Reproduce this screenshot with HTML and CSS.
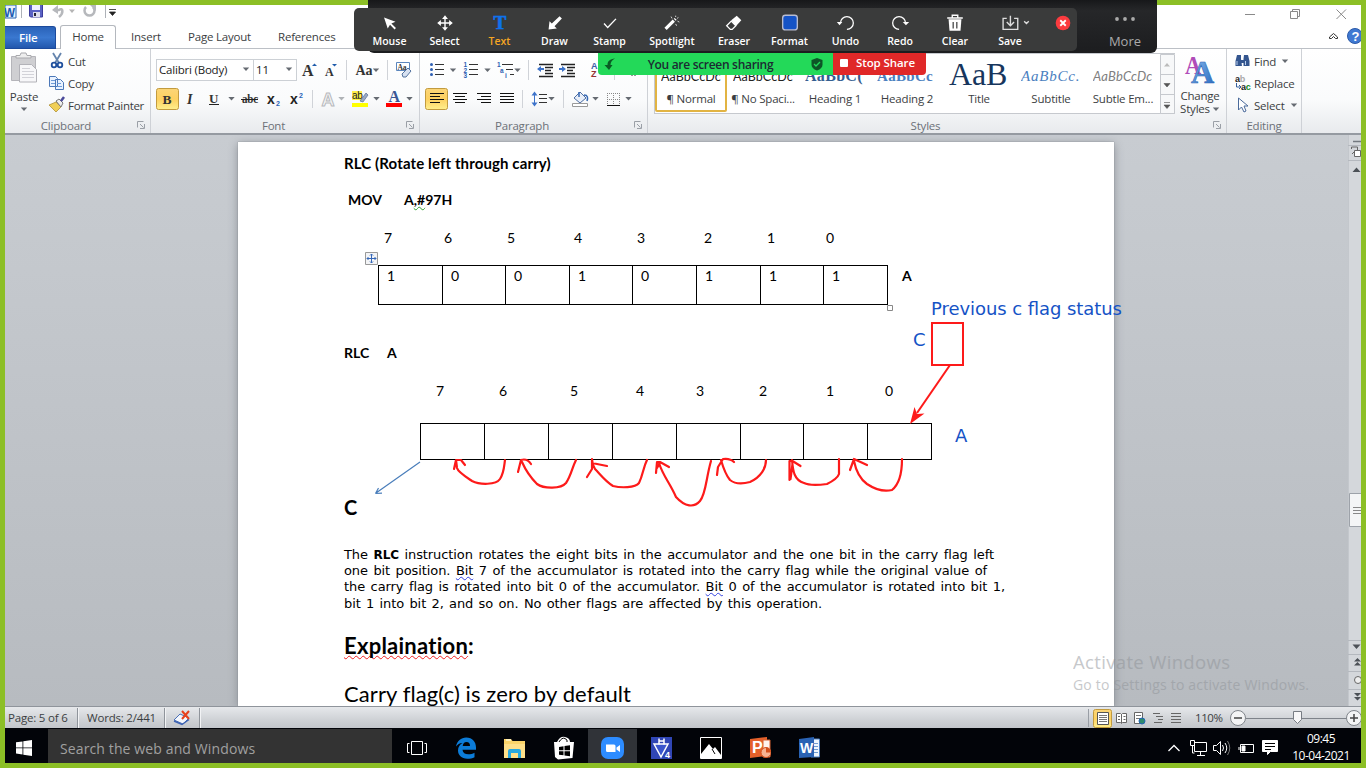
FILE: index.html
```html
<!DOCTYPE html>
<html lang="en">
<head>
<meta charset="utf-8">
<title>Word - shared screen</title>
<link rel="stylesheet" href="styles.css">
</head>
<body>
<svg class="defs" width="0" height="0">
  <defs>
    <path id="dd" d="M-3.2-1.5h6.4L0 2z" fill="#666b72"/>
    <g id="launch" fill="none" stroke="#9a9fa6"><path d="M.5 6.500V.5h6"/><path d="M3 3l3.500 3.500M7.500 3v4.500H3"/></g>
    <linearGradient id="gold" x2="0" y2="1"><stop offset="0" stop-color="#fbd578"/><stop offset=".5" stop-color="#fdd060"/><stop offset="1" stop-color="#ffef8c"/></linearGradient>
    <linearGradient id="blueA" x2="1" y2="1"><stop offset="0" stop-color="#8fc1f2"/><stop offset="1" stop-color="#2566bd"/></linearGradient>
  </defs>
</svg>
<div class="screen">
  <header class="titlebar">
    <svg width="120" height="20" viewBox="5 5 120 20">
      <path d="M5 5h11v13H5z" fill="#eaf2fb" stroke="#2a65b3"/><text x="4" y="16.500" class="wl" textLength="11" lengthAdjust="spacingAndGlyphs">W</text>
      <path d="M21.500 5v13M105.500 5v13" stroke="#aeb2b8"/>
      <path d="M29.500 3h13v14h-12l-1-1z" fill="#5a62c4" stroke="#3c3c9c"/><path d="M32 3h8v7h-8z" fill="#eef0ff"/><path d="M33 12h7v5h-7z" fill="#dde"/><path d="M34 13h2v3h-2z" fill="#223"/>
      <path d="M54 10h5c4-3 5 3 0 7" fill="none" stroke="#b6b8bc" stroke-width="2.500"/><path d="M52 10l6-5v9z" fill="#b6b8bc"/>
      <path d="M69 9.500h6l-3 3.500z" fill="#b5b5b5"/>
      <path d="M86 7a5 5 0 1 0 7 0" fill="none" stroke="#b6b8bc" stroke-width="2.500"/><path d="M90 5h6v6z" fill="#b6b8bc"/>
      <path d="M109 9.500h7M109.500 12h6l-3 3.500z" fill="#222" stroke="#222" stroke-width=".8"/>
    </svg>
    <svg width="120" height="20" viewBox="1241 5 120 20" fill="none" stroke="#8a8a8a">
      <path d="M1245 14.500h10M1290.500 11.500h7v7h-7zM1292.500 11v-1.500h7v7h-1.500M1336.500 9.500l9.500 9.500M1346 9.500l-9.500 9.500"/>
    </svg>
  </header>
  <nav class="tabs">
    <span class="tab file">File</span><span class="tab home">Home</span><span class="tab t-insert">Insert</span><span class="tab t-layout">Page Layout</span><span class="tab t-ref">References</span>
    <svg class="tabs-end" width="36" height="22" viewBox="1325 26 36 22">
      <path d="M1329.500 37l4-3.500 4 3.500v1.500l-2 0-2-2-2 2h-2z" fill="#fff" stroke="#333" stroke-width="1"/>
      <circle cx="1355" cy="36" r="7.500" fill="#3f79d3" stroke="#2c5aa8"/><text x="1351.500" y="41" class="help">?</text>
    </svg>
  </nav>
  <section class="ribbon">
    <div class="group clip">
      <div class="body">
        <div class="paste">
          <svg width="32" height="38" viewBox="9 52 32 38">
            <path d="M12.500 58.500h24v24h-24z" fill="#cfcfd2" stroke="#b5b5ba"/><path d="M17 60v-2.500h4l1-2.500h5l1 2.500h4V60z" fill="#eee" stroke="#a9a9ad"/>
            <path d="M20.500 66.500h12l5 5v12.500h-17z" fill="#f7f7f9" stroke="#b2b2b8"/><path d="M23 70.500h8M23 73.500h12M23 76.500h12M23 79.500h12" stroke="#d2d2d8"/>
          </svg>
          <span>Paste</span>
          <svg width="10" height="8" viewBox="-5 -4 10 8"><use href="#dd"/></svg>
        </div>
        <ul class="cmds">
          <li><svg width="18" height="18" viewBox="48 53 18 18"><path d="M53 54l6 10M61 54l-6 10" stroke="#6484ad" stroke-width="1.800"/><circle cx="54" cy="66" r="2.300" fill="none" stroke="#1f4f9d" stroke-width="1.800"/><circle cx="60" cy="66" r="2.300" fill="none" stroke="#1f4f9d" stroke-width="1.800"/></svg><span>Cut</span></li>
          <li><svg width="18" height="18" viewBox="48 75 18 18"><path d="M49.500 77.500h6l2 2v8h-8zM55.500 80.500h5l3 3v7h-8z" fill="#e9f2ff" stroke="#4c78b8"/><path d="M51 81.500h4M51 84.500h4M57 84.500h4M57 87.500h5" stroke="#6e9bd8"/></svg><span>Copy</span></li>
          <li><svg width="18" height="18" viewBox="48 97 18 18"><path d="M49 106l7-3 5 5-5 5z" fill="#f0cf57" stroke="#a88728" stroke-width=".7"/><path d="M56 102l3-2 4 4-2 4z" fill="#eee" stroke="#777"/><path d="M61 102l3-4" stroke="#4a4a9a" stroke-width="2.500"/></svg><span>Format Painter</span></li>
        </ul>
      </div>
      <div class="cap"><span>Clipboard</span><svg width="9" height="9"><use href="#launch"/></svg></div>
    </div>
    <div class="group font">
      <div class="body stack">
        <div class="line">
          <div class="combo fam"><span>Calibri (Body)</span><svg width="8" height="6" viewBox="-4 -3 8 6"><use href="#dd"/></svg></div>
          <div class="combo size"><span>11</span><svg width="8" height="6" viewBox="-4 -3 8 6"><use href="#dd"/></svg></div>
          <svg width="122" height="22" viewBox="297 59 122 22">
            <text x="302" y="76" class="ser" font-size="16">A</text><path d="M312 66l2.500-2.500 2.500 2.500z" fill="#1f5cab"/>
            <text x="325" y="76" class="ser" font-size="12">A</text><path d="M332 64h5l-2.500 2.500z" fill="#1f5cab"/>
            <path d="M346.500 60v20M387.500 60v20" stroke="#d0d3d8"/>
            <text x="355.500" y="75" class="ser" font-size="14">Aa</text><use href="#dd" x="376" y="70"/>
            <path d="M396.500 62.500h13v8h-13z" fill="#fff" stroke="#5b86bd"/><text x="397.500" y="69.500" class="ser" font-size="7.500">Aa</text><path d="M402 74l6-6 3 3-5 6h-3z" fill="#d7e1f1" stroke="#55749f"/>
          </svg>
        </div>
        <svg class="line2" width="268" height="22" viewBox="151 88 268 22">
          <rect x="156.500" y="88.500" width="22" height="21" rx="2" fill="url(#gold)" stroke="#c29b3f"/>
          <text x="162.500" y="103.500" class="ser" font-size="13.500">B</text>
          <text x="187" y="103.500" class="ser" font-size="14" font-style="italic">I</text>
          <text x="209" y="102.500" class="ser" font-size="13">U</text><path d="M209 104.500h10" stroke="#222"/><use href="#dd" x="231.500" y="98.500"/>
          <text x="242" y="103" class="ser" font-size="12" textLength="16" lengthAdjust="spacingAndGlyphs">abc</text><path d="M241 99.500h17" stroke="#222"/>
          <text x="267" y="104" class="sx" font-size="14">x</text><text x="276" y="106" class="sub">2</text>
          <text x="290" y="104" class="sx" font-size="14">x</text><text x="299" y="98" class="sub">2</text>
          <path d="M312.500 90v18" stroke="#d0d3d8"/>
          <text x="321.500" y="106" font-family="Liberation Sans" font-weight="700" font-size="18" fill="#f6f6f6" stroke="#b7b9bd">A</text><use href="#dd" x="341.500" y="98.500" opacity=".5"/>
          <path d="M352 91h10v9h-10z" fill="#fff04a"/><text x="352" y="98.500" font-family="Liberation Sans" font-size="10" fill="#222">ab</text><path d="M360 101l6-8 2 2-5 7z" fill="#9aa9c5" stroke="#5a6e94" stroke-width=".7"/><path d="M352 103h16v4h-16z" fill="#ff0"/><use href="#dd" x="376.500" y="98.500"/>
          <text x="388.500" y="102" font-family="Liberation Serif" font-weight="700" font-size="16" fill="#3a5795">A</text><path d="M386 103h16v4h-16z" fill="red"/><use href="#dd" x="409.500" y="98.500"/>
        </svg>
      </div>
      <div class="cap"><span>Font</span><svg width="9" height="9"><use href="#launch"/></svg></div>
    </div>
    <div class="group para">
      <div class="body stack">
        <svg width="227" height="22" viewBox="420 59 227 22">
          <g fill="#2e5fb3"><circle cx="431.500" cy="64.500" r="1.500"/><circle cx="431.500" cy="69.500" r="1.500"/><circle cx="431.500" cy="74.500" r="1.500"/></g>
          <path d="M435 64.500h9M435 69.500h9M435 74.500h9M469 64.500h9M469 69.500h9M469 74.500h9M502 64.500h11M506 69.500h7M510 74.500h4" stroke="#333"/>
          <g class="num"><text x="463.500" y="67">1</text><text x="463.500" y="72.500">2</text><text x="463.500" y="78">3</text><text x="497" y="67">1</text><text x="500" y="72.500">a</text><text x="505" y="77.500">i</text></g>
          <use href="#dd" x="453" y="70"/><use href="#dd" x="487.500" y="70"/><use href="#dd" x="517.500" y="70"/>
          <path d="M528.500 60v20M614.500 60v20" stroke="#d0d3d8"/>
          <path d="M539 64.500h14M545 67.500h8M545 70.500h6M545 73.500h8M539 76.500h14M561 64.500h14M567 67.500h8M567 70.500h6M567 73.500h8M561 76.500h14" stroke="#222" stroke-width="1.300"/>
          <path d="M537 69l4-3v2h3v2h-3v2zM566 69l-4-3v2h-3v2h3v2z" fill="#3c72ca"/>
          <text x="591" y="69" font-family="Liberation Sans" font-weight="700" font-size="9" fill="#3b5fa9">A</text><text x="591" y="77" font-family="Liberation Sans" font-weight="700" font-size="9" fill="#943434">Z</text><path d="M604 63v12M632 74v2M635 74v2" stroke="#333"/>
        </svg>
        <svg class="line2" width="227" height="22" viewBox="420 88 227 22">
          <rect x="425.500" y="88.500" width="22" height="21" rx="2" fill="url(#gold)" stroke="#c29b3f"/>
          <path d="M430 93.500h14M430 96.500h10M430 99.500h14M430 102.500h10M453 93.500h14M455 96.500h10M453 99.500h14M455 102.500h10M477 93.500h14M481 96.500h10M477 99.500h14M481 102.500h10M500 93.500h14M500 96.500h14M500 99.500h14M500 102.500h14" stroke="#111"/>
          <path d="M522.500 90v18M563.500 90v18" stroke="#d0d3d8"/>
          <path d="M534.500 94v10" stroke="#3c72ca"/><path d="M531.500 95.500l3-4 3 4zM531.500 102.500l3 4 3-4z" fill="#3c72ca"/><path d="M539 94.500h8M539 98.500h8M539 102.500h8" stroke="#333"/><use href="#dd" x="551.500" y="98.500"/>
          <path d="M574 98l6-6 6 6-6 5z" fill="#e8eef8" stroke="#4c6da3"/><path d="M579 97v-5M584 95c4 0 4 3 3 6" stroke="#3467b3" fill="none" stroke-width="1.500"/><path d="M572.500 103.500h15v3h-15z" fill="#fff" stroke="#999"/><use href="#dd" x="595.500" y="98.500"/>
          <path d="M607.500 93v13M613.500 93v12M619.500 93v13M607 93.500h13M607 99.500h13" stroke="#888" stroke-dasharray="1 1"/><path d="M607 105.500h13" stroke="#111"/><use href="#dd" x="628.500" y="98.500"/>
        </svg>
      </div>
      <div class="cap"><span>Paragraph</span><svg width="9" height="9"><use href="#launch"/></svg></div>
    </div>
    <div class="group styles">
      <div class="body">
        <div class="gallery">
          <div class="style sel"><b class="p-normal">AaBbCcDc</b><span>¶ Normal</span></div>
          <div class="style"><b class="p-normal">AaBbCcDc</b><span>¶ No Spaci...</span></div>
          <div class="style"><b class="p-h1">AaBbC(</b><span>Heading 1</span></div>
          <div class="style"><b class="p-h2">AaBbCc</b><span>Heading 2</span></div>
          <div class="style"><b class="p-title">AaB</b><span>Title</span></div>
          <div class="style"><b class="p-sub">AaBbCc.</b><span>Subtitle</span></div>
          <div class="style"><b class="p-em">AaBbCcDc</b><span>Subtle Em...</span></div>
          <svg class="gscroll" width="15" height="60" viewBox="0 0 15 60"><path d="M.5.5h14v59H.5zM.5 20.500h14M.5 40.500h14" fill="#f7f8f9" stroke="#c6c9ce"/><path d="M4 12.500h6L7 9z" fill="#bbb"/><path d="M4 29.500h6L7 33zM4 51h6l-3 3.500zM4 48.500h6" fill="#555" stroke="#555" stroke-width=".6"/></svg>
        </div>
        <div class="change">
          <svg width="34" height="34" viewBox="1183 53 34 34"><text x="1185" y="74" font-family="Liberation Serif" font-weight="700" font-size="26" textLength="16" lengthAdjust="spacingAndGlyphs" fill="#b04cb8">A</text><text x="1191" y="82.500" font-family="Liberation Serif" font-weight="700" font-size="32" textLength="23" lengthAdjust="spacingAndGlyphs" fill="url(#blueA)" stroke="#2f68b5" stroke-width=".6">A</text></svg>
          <span>Change</span><span class="row2">Styles <svg width="8" height="6" viewBox="-4 -3 8 6"><use href="#dd"/></svg></span>
        </div>
      </div>
      <div class="cap"><span>Styles</span><svg width="9" height="9"><use href="#launch"/></svg></div>
    </div>
    <div class="group edit">
      <div class="body">
        <ul class="cmds">
          <li><svg width="18" height="18" viewBox="1234 53 18 18"><path d="M1237 56h4v4l1 7h-6.500v-5zM1244 56h4l1.500 6v5h-6v-7z" fill="#34568f"/><path d="M1240 61h5v3h-5z" fill="#34568f"/><path d="M1237 62v4M1245.500 62v4" stroke="#b8cdec"/></svg><span>Find</span><svg class="dds" width="8" height="6" viewBox="-4 -3 8 6"><use href="#dd"/></svg></li>
          <li><svg width="18" height="18" viewBox="1234 75 18 18"><g font-family="Liberation Sans" font-weight="700" font-size="9"><text x="1235" y="83" fill="#222">a<tspan fill="#aaa">b</tspan></text><text x="1241" y="91" fill="#222">a<tspan fill="#118a22">c</tspan></text></g><path d="M1236.500 84v4h4M1239 86l2 2-2 2" fill="none" stroke="#35609f"/></svg><span>Replace</span></li>
          <li><svg width="18" height="18" viewBox="1234 97 18 18"><path d="M1238.500 99v12l3-3 2.500 5 2-1-2-5h4z" fill="#fff" stroke="#4a6a9b"/></svg><span>Select</span><svg class="dds" width="8" height="6" viewBox="-4 -3 8 6"><use href="#dd"/></svg></li>
        </ul>
      </div>
      <div class="cap"><span>Editing</span></div>
    </div>
  </section>
  <main class="desk">
    <article class="page">
      <p class="b l1">RLC (Rotate left through carry)</p>
      <p class="b l2"><span class="mov">MOV</span><span>A<i class="sq green">,#</i>97H</span></p>
      <div class="bits first"><span>7</span><span>6</span><span>5</span><span>4</span><span>3</span><span>2</span><span>1</span><span>0</span></div>
      <div class="regrow"><div class="reg r1"><span>1</span><span>0</span><span>0</span><span>1</span><span>0</span><span>1</span><span>1</span><span>1</span></div><b>A</b></div>
      <p class="b l3"><span>RLC</span><span>A</span></p>
      <div class="bits second"><span>7</span><span>6</span><span>5</span><span>4</span><span>3</span><span>2</span><span>1</span><span>0</span></div>
      <div class="reg r2"><span></span><span></span><span></span><span></span><span></span><span></span><span></span><span></span></div>
      <p class="bigc">C</p>
      <div class="desc">
        <p class="d1">The <b>RLC</b> instruction rotates the eight bits in the accumulator and the one bit in the carry flag left</p>
        <p class="d2">one bit position. <i class="sq blue">Bit</i> 7 of the accumulator is rotated into the carry flag while the original value of</p>
        <p class="d3">the carry flag is rotated into bit 0 of the accumulator. <i class="sq blue">Bit</i> 0 of the accumulator is rotated into bit 1,</p>
        <p class="d4">bit 1 into bit 2, and so on. No other flags are affected by this operation.</p>
      </div>
      <p class="exp"><i class="sq red">Explaination</i>:</p>
      <p class="carry">Carry flag(c) is zero by default</p>
    </article>
    <svg class="vscroll" width="13" height="571" viewBox="1348 135 13 571">
      <path d="M1348 135h13v571h-13z" fill="#d4d7db"/><path d="M1348.500 135v571" stroke="#c3c7cc"/>
      <path d="M1348 145.500h13M1348 160.500h13M1348 640.500h13M1348 654.500h13M1348 671.500h13M1348 689.500h13" stroke="#b4b8be"/>
      <path d="M1353 141.500h8" stroke="#73787f" stroke-width="1.500"/><path d="M1354.500 150.500h6v6h-6z" fill="#fff" stroke="#666"/><path d="M1351.500 149v-2h6v3M1352 154l3-3" fill="none" stroke="#666"/>
      <path d="M1352.500 172h8l-4-4.500zM1352.500 644.500h8l-4 4.500z" fill="#4c5157"/>
      <path d="M1349.500 493.500h14v33h-14z" fill="#f4f5f6" stroke="#9da2a9"/><path d="M1353 507.500h8M1353 510.500h8M1353 513.500h8" stroke="#888"/>
      <path d="M1354 661.500h7l-3.500-3.500zM1354 665.500h7l-3.500-3.500zM1354 693h7l-3.500 3.500zM1354 697h7l-3.500 3.500z" fill="#4c5157"/><circle cx="1358" cy="680" r="3.500" fill="#eee" stroke="#666"/>
    </svg>
  </main>
  <footer class="status">
    <span class="pg">Page: 5 of 6</span><span class="wd">Words: 2/441</span>
    <span class="pf"><svg width="18" height="16" viewBox="172 709 18 16"><path d="M173 719l6-6 9 4-6 6z" fill="#f3f6fc" stroke="#4a70b8"/><path d="M173 720l8 3.500 7-5" fill="none" stroke="#3d63b3" stroke-width="1.500"/><path d="M181 710l7 8M188 710l-7 8" stroke="#e8401c" stroke-width="2"/></svg></span>
    <svg class="views" width="100" height="22" viewBox="1088 706 100 22">
      <path d="M1088.500 708v18" stroke="#999ea5"/><rect x="1093.500" y="708.500" width="18" height="18" rx="2" fill="url(#gold)" stroke="#c29b3f"/>
      <path d="M1097.500 711.500h11v12h-11z" fill="#fff" stroke="#555"/><path d="M1099 714.500h8M1099 716.500h8M1099 718.500h8M1099 720.500h8" stroke="#777"/>
      <path d="M1116.500 712.500h4l1 1 1-1h4v9h-4l-1 1-1-1h-4zM1121.500 713v9M1118 715.500h2M1118 718.500h2M1123.500 715.500h2M1123.500 718.500h2" fill="#fff" stroke="#666"/>
      <path d="M1134.500 711.500h8v11h-8z" fill="#fff" stroke="#666"/><path d="M1136 714.500h5M1136 717.500h5" stroke="#777"/><circle cx="1142" cy="720" r="3" fill="#2e8a6e" stroke="#2565b5"/>
      <path d="M1153 712.500h7M1156 715.500h7M1158 718.500h5M1154 721.500h8M1171 712.500h10M1171 715.500h10M1171 718.500h10M1171 721.500h10" stroke="#666"/>
    </svg>
    <span class="zoom">110%</span>
    <svg width="134" height="22" viewBox="1227 706 134 22">
      <path d="M1246 717.500h101" stroke="#7e838a"/><circle cx="1238" cy="717" r="7.500" fill="#f3f4f5" stroke="#80858b"/><circle cx="1354" cy="717" r="7.500" fill="#f3f4f5" stroke="#80858b"/><path d="M1234 717h8M1350 717h8M1354 713v8" stroke="#444" stroke-width="1.500"/>
      <path d="M1293.500 710.500h8v8l-4 4-4-4z" fill="#f7f7f8" stroke="#777c83"/>
    </svg>
  </footer>
  <footer class="taskbar">
    <div class="start"><svg width="16" height="16" viewBox="0 0 16 16" fill="#fff"><path d="M0 2.300l6.500-.9v6.100H0zM7.300 1.300L16 0v7.500H7.300zM0 8.300h6.500v6.200L0 13.600zM7.300 8.300H16V16l-8.700-1.300z"/></svg></div>
    <div class="search">Search the web and Windows</div>
    <div class="app tv"><svg width="22" height="16" fill="none" stroke="#fff"><path d="M5.500 1.500h11v13h-11zM3.500 3.500h-2v9h2M18.500 3.500h2v9h-2"/></svg></div>
    <div class="app"><svg width="22" height="22" viewBox="0 0 22 22"><path d="M1 9.500C2 4 6 .5 11.200.5 17.500.5 21 5 21 10.500v2.300H7.500c.3 3 2.500 4.500 5.800 4.500 2.300 0 4.300-.5 6.200-1.600v4.500c-2 1-4.500 1.500-7.300 1.500C6.500 21.700 3 18 3 13.500c0-3.500 1.800-6 4.500-7.500C4.500 6.200 2.500 7.500 1 9.500zM7.700 9H15c0-2.500-1.200-4-3.500-4S8.200 6.500 7.700 9z" fill="#0c7cd8"/></svg></div>
    <div class="app"><svg width="22" height="22" viewBox="0 0 22 22"><path d="M0 2h7l1.500 2H21v17H0z" fill="#fbd46a"/><path d="M2 2h5v2H2z" fill="#fff0b8"/><path d="M0 7h21v14H0z" fill="#ffe08a"/><path d="M4 21v-7q0-2 2-2h9q2 0 2 2v7h-3v-5H7v5z" fill="#28a8e0"/></svg></div>
    <div class="app"><svg width="22" height="24" viewBox="0 0 22 24"><path d="M1 6h3q3-6 8-5t5 5h4l-1.500 16L5 23.500 2 21z" fill="#fff"/><path d="M6 6q3-5 6-3.500T14 6" fill="none" stroke="#000"/><path d="M6 11l4.500-.7v4H6zM11.500 10.100l5.500-.8v5h-5.500zM6 15.300h4.500v4L6 18.700zM11.500 15.300H17v5l-5.500-.8z" fill="#000"/></svg></div>
    <div class="app on"><svg width="23" height="22" viewBox="0 0 23 22"><rect width="23" height="22" rx="7" fill="#2d8cff"/><path d="M5 7.500h8q1.500 0 1.500 1.500v6h-8Q5 15 5 13.500zM15.500 10.500l3.500-2.500v7l-3.500-2.500z" fill="#fff"/></svg></div>
    <div class="app"><svg width="22" height="22" viewBox="0 0 22 22"><path d="M0 0h21v22H0z" fill="#3046b5"/><path d="M3 7l7 13 7-13z" fill="#3a55cc" stroke="#fff" stroke-width="1.500"/><path d="M8 1.500v6M13 1.500v6M8 4h5" fill="none" stroke="#fff" stroke-width="1.500"/><text x="14" y="21" fill="#fff" font-family="Liberation Sans" font-weight="700" font-size="9">4</text></svg></div>
    <div class="app"><svg width="22" height="22" viewBox="0 0 22 22"><path d="M.5.5h21v21H.5z" stroke="#fff"/><path d="M1 17l8-10 4 5 2-2 6 8v3H1z" fill="#fff"/><path d="M12 12l3 5" stroke="#000"/></svg></div>
    <div class="app"><svg width="22" height="22" viewBox="0 0 22 22"><path d="M1 2l17-2v19L1 21z" fill="#e4602a"/><path d="M14 3h7v17h-7z" fill="#fff3ec" stroke="#d66030"/><circle cx="17" cy="15.500" r="5" fill="#f6b392" stroke="#d4501c"/><path d="M17 15.500v-5a5 5 0 0 1 5 5z" fill="#d4501c"/><text x="3" y="16" fill="#fff" font-family="Liberation Sans" font-weight="700" font-size="16">P</text></svg></div>
    <div class="app"><svg width="22" height="22" viewBox="0 0 22 22"><path d="M13 2h8.500v18H13z" fill="#eef5fd" stroke="#4b7ec2"/><path d="M16 6.500h4M16 9.500h4M16 12.500h4M16 15.500h4" stroke="#6f9bd2"/><path d="M1 2l15-2v20L1 21z" fill="#2a63b4"/><text x="2" y="15.500" fill="#fff" font-family="Liberation Sans" font-weight="700" font-size="14">W</text></svg></div>
    <div class="tray">
      <svg width="116" height="20" viewBox="1165 738 116 20" fill="none" stroke="#fff">
        <path d="M1168.500 751l5.500-5.500 5.500 5.500" stroke-width="1.300"/>
        <path d="M1194.500 742.500h12v9h-12zM1200.500 752v3M1197 755.500h8M1190.500 740.500h4v5h-4zM1192.500 746v7h2"/>
        <path d="M1213.500 745.500h3l4-4v13l-4-4h-3zM1222.500 745q2 3 0 6M1225 743q3.500 5 0 10"/><path d="M1227.500 741q4.500 7 0 14" stroke="#777"/>
        <path d="M1240.500 744.500h13v8h-13zM1239 747v3" /><path d="M1242 746h3v5h-3z" fill="#fff"/>
        <path d="M1262.500 740.500h15v11h-7l-3 3v-3h-5z" fill="#fff"/><path d="M1265 743.500h10M1265 746.500h10M1265 749.500h6" stroke="#000"/>
      </svg>
      <div class="clock"><span>09:45</span><span>10-04-2021</span></div>
    </div>
  </footer>
</div>

<svg class="ink" width="1366" height="768" viewBox="0 0 1366 768">
  <g fill="none">
    <path d="M365.500 252.500h12v12h-12z" fill="#f3f4f6" stroke="#999"/><path d="M371.500 254v9M367 258.500h9M370 255.500l1.500-1.500 1.500 1.500M370 261.500l1.500 1.500 1.500-1.500M368.500 257l-1.500 1.500 1.500 1.500M374.500 257l1.500 1.500-1.500 1.500" stroke="#3467b8"/>
    <path d="M887.500 305.500h5v5h-5z" stroke="#888" fill="#fff"/>
    <path d="M420 462l-44 31M375.500 493.500l3-5.500M375.500 493.500l6.500-.3" stroke="#4a7ebb" stroke-width="1.200"/>
    <path d="M932 323h31v42h-31z" stroke="#fd1a1a" stroke-width="2"/><path d="M950 365l-33 48" stroke="#fd1a1a" stroke-width="2"/><path d="M910 424l4.500-17 2.500 7 7.500-.5z" fill="#fd1a1a"/>
    <g stroke="#fd1a1a" stroke-width="2.200" stroke-linecap="round" stroke-linejoin="round">
      <path d="M505 460c-1 7-1 13-5 19-4 6-20 6-28 2-6-4-14-9-15-13l-1-8M454 469l2-9h5l4 5"/>
      <path d="M576 460c-4 8-5 16-10 23-5 6-22 6-29 1-7-7-11-13-15-22M518 472l3-12q6-2 10 4"/>
      <path d="M647 460c-4 8-4 15-8 23-4 5-18 5-26 3-8-5-13-12-18-17-3-5-3-8-3-10M587 477l5-8v-9M592 463l15 3"/>
      <path d="M711 461c-5 17-5 33-11 40-6 7-15 6-24-4-6-14-13-21-17-34M656 473l1-11h3l9 5M657 468l3-5"/>
      <path d="M766 460c0 8-5 17-16 22-7 2-15 2-20-2-5-6-7-13-9-20M717 475l1-8 5-8q7-1 11 3"/>
      <path d="M839 459v15c-1 3-6 7-12 10-8 1-17 2-23-1-10-3-11-12-12-23M789.500 480v-19h3l8 5M790.500 479l2-15"/>
      <path d="M902 459q0 23-10 31c-8 2-16 0-25-6-7-5-11-13-13-23M850 470l4-11 13 6"/>
    </g>
  </g>
  <g class="note"><text x="931" y="315" textLength="191">Previous c flag status</text><text x="913" y="346">C</text><text x="955" y="442">A</text></g>
  <g class="act"><text x="1073" y="668.500" font-size="18.500" textLength="157">Activate Windows</text><text x="1073" y="690" font-size="14" textLength="236">Go to Settings to activate Windows.</text></g>
</svg>

<div class="zoompanel"><div class="more"><svg width="22" height="6" fill="#aaa"><circle cx="3" cy="3" r="1.900"/><circle cx="11" cy="3" r="1.900"/><circle cx="19" cy="3" r="1.900"/></svg><span>More</span></div></div>
<div class="annot">
  <div class="tool mouse"><svg width="24" height="24" viewBox="-12 -12 24 24" fill="#fff"><path d="M-6.500-6L6-1.500 1.500.5l5 5-1.500 1.500-5-5L-2.500 6z"/></svg>Mouse</div>
  <div class="tool select"><svg width="24" height="24" viewBox="-12 -12 24 24" fill="#fff"><path d="M0-8.500l3.200 4h-6.400zM0 8.500l3.200-4h-6.400zM-8.500 0l4-3.200v6.400zM8.500 0l-4-3.200v6.400z"/><path d="M-6 0H6M0-6V6" stroke="#fff" stroke-width="1.500"/></svg>Select</div>
  <div class="tool text"><svg width="24" height="24" viewBox="-12 -12 24 24"><text x="-7" y="7" font-family="Liberation Serif" font-weight="700" font-size="21" fill="#0e72ed" stroke="#0e72ed" stroke-width=".7">T</text></svg>Text</div>
  <div class="tool draw"><svg width="24" height="24" viewBox="-12 -12 24 24" fill="#fff"><path d="M-7 7l1-9 2.500 2.500L5-7.500 7.500-5-.5 3.500 2 6z"/></svg>Draw</div>
  <div class="tool stamp"><svg width="24" height="24" viewBox="-12 -12 24 24" fill="none" stroke="#fff" stroke-width="1.500"><path d="M-6.500.5l4 4.500 9-9.500"/></svg>Stamp</div>
  <div class="tool spot"><svg width="24" height="24" viewBox="-12 -12 24 24"><path d="M-7 6.500L2-2.500" stroke="#fff" stroke-width="3.500"/><path d="M3-3.500l1-1" stroke="#fff" stroke-width="3"/><path d="M-1-7l1 2M4-8v1.500M7-6L5.500-5M8-1L6-2M4 1l1 2" stroke="#ddd"/></svg>Spotlight</div>
  <div class="tool eraser"><svg width="24" height="24" viewBox="-12 -12 24 24"><path d="M-8 3l5-5 5 5-4 4h-2z" fill="none" stroke="#fff" stroke-width="1.400"/><path d="M-3-3l6-5 5 5-6 6.500z" fill="#fff"/></svg>Eraser</div>
  <div class="tool format"><svg width="24" height="24" viewBox="-12 -12 24 24"><rect x="-8" y="-8.500" width="16" height="16" rx="3" fill="#1553c6" stroke="#b8bcd0" stroke-width="1.500"/></svg>Format</div>
  <div class="tool undo"><svg width="24" height="24" viewBox="-12 -12 24 24"><path d="M-6 0a7 7 0 1 1 7 7" fill="none" stroke="#fff" stroke-width="1.400"/><path d="M-10 0h6l-3 3.500z" fill="#fff" transform="translate(0 -1)"/></svg>Undo</div>
  <div class="tool redo"><svg width="24" height="24" viewBox="-12 -12 24 24"><path d="M6 0A7 7 0 1 0-1 7" fill="none" stroke="#fff" stroke-width="1.400"/><path d="M3-1h7l-3.500 3.500z" fill="#fff"/></svg>Redo</div>
  <div class="tool clear"><svg width="24" height="24" viewBox="-12 -12 24 24"><path d="M-8.500-5.500h17M-3-6v-2.500h6V-6" fill="none" stroke="#fff" stroke-width="1.500"/><path d="M-7-4H7L6 8.500H-6z" fill="#fff"/><path d="M-2-1v7M2-1v7" stroke="#393a3a" stroke-width="1.300"/></svg>Clear</div>
  <div class="tool save"><svg width="34" height="24" viewBox="-12 -12 34 24" fill="none" stroke="#ddd" stroke-width="1.500"><path d="M-4-5h-4V7H8V-5H4M0-8v11M-4-1l4 4 4-4M15-2l2.500 2.500L20-2"/></svg>Save</div>
  <div class="tool quit"><svg width="24" height="24" viewBox="-12 -12 24 24"><circle r="8" fill="#fb3b3f"/><path d="M-3-3l6 6M3-3l-6 6" stroke="#fff" stroke-width="2"/></svg></div>
</div>
<div class="share"><div class="sharing"><svg width="12" height="13" viewBox="0 0 12 13"><path d="M11 .5C6 1 3.500 3 3.500 7H.5l4.500 5 3.500-5H6.500C6.500 4 8 2 11 .5z" fill="#0a5c24"/></svg><span>You are screen sharing</span><svg width="12" height="13" viewBox="0 0 12 13"><path d="M6 0l5.500 2v4.500q0 4-5.500 6-5.500-2-5.500-6V2z" fill="#0d5527"/><path d="M3 6l2 2 4-4" fill="none" stroke="#23d959" stroke-width="1.300"/></svg></div><div class="stop"><i></i><span>Stop Share</span></div></div>
</body>
</html>
```
FILE: styles.css
```css
*{box-sizing:border-box}
body{margin:0;width:1366px;height:768px;overflow:hidden;position:relative;font-family:"Open Sans","Noto Sans",sans-serif;font-size:12px;color:#3b3e42}
p,ul{margin:0;padding:0;list-style:none}
svg{display:block;flex:none}
.defs{position:absolute}
.screen{width:1366px;height:768px;border:5px solid #8cbf26;display:flex;flex-direction:column;background:#fff}
.titlebar{height:20px;display:flex;justify-content:space-between;flex:none}
.wl{font:700 13px "Liberation Sans";fill:#1c5bb0}
.help{font:700 13px "Liberation Sans";fill:#fff}
.tabs{height:24px;flex:none;display:flex;border-bottom:1px solid #bcc0c6;font-size:11.5px;line-height:24px}
.tab{white-space:nowrap;letter-spacing:-.2px}
.file{width:51px;height:23px;margin-top:1px;background:linear-gradient(#2a62b8,#3a78d0 50%,#2257ad);border:1px solid #1c4a9c;border-left:0;border-radius:0 3px 0 0;color:#fff;padding-left:14px;line-height:21px;font-weight:600}
.home{width:56px;height:24px;margin-left:4px;border:1px solid #b4b8be;border-bottom:0;border-radius:3px 3px 0 0;background:#fff;text-align:center;line-height:22px}
.t-insert{margin-left:15px;width:57px}.t-layout{width:90px}.t-ref{width:90px}
.tabs-end{margin:1px 0 0 auto}
.ribbon{height:86px;flex:none;display:flex;background:linear-gradient(#fff,#fafbfc 60%,#e8eaed);border-bottom:2px solid #959aa1;font-size:11.5px;letter-spacing:-.2px}
.group{display:flex;flex-direction:column;border-right:1px solid #ced1d6;flex:none}
.body{height:68px;display:flex;flex:none}
.cap{height:16px;display:flex;align-items:center;color:#6c7178;line-height:16px;padding:1px 4px 0 0}
.cap span{flex:1;text-align:center}
.clip{width:146px}.font{width:269px}.para{width:228px}.styles{width:579px}.edit{width:75px}
.clip .cap,.para .cap,.font .cap,.styles .cap{text-indent:-10px}
.edit .cap{text-indent:4px}
.paste{width:38px;display:flex;flex-direction:column;align-items:center;padding-top:1px;line-height:17px}
.cmds{padding-top:1px}
.cmds li{height:22px;display:flex;align-items:center;white-space:nowrap}
.clip .cmds{margin-left:5px;letter-spacing:-.3px}.clip .cmds span{margin-left:2px}
.edit .cmds{margin-left:7px}.edit .cmds span{margin-left:2px}
.dds{margin-left:5px}
.stack{flex-direction:column;padding-top:10px}
.line{display:flex;padding-left:5px}
.line2{margin-top:7px}
.combo{height:22px;border:1px solid #ccd0d5;background:#fff;display:flex;align-items:center;justify-content:space-between;padding:0 3px 2px 2px;color:#222;letter-spacing:-.2px}
.fam{width:98px}.size{width:43px;border-left:0}
.ser{font-family:"Liberation Serif";font-weight:700;fill:#333}
.sx{font-family:"Liberation Sans";font-weight:700;fill:#222}
.sub{font:700 7px "Liberation Sans";fill:#2a62b8}
.num text{font:700 6.5px "Liberation Sans";fill:#2e5fb3}
.gallery{display:flex;width:521px;height:61px;margin:4px 0 0 6px;border:1px solid #c6c9ce;border-right:0;background:#fff}
.style{width:72px;height:58px;display:flex;flex-direction:column;align-items:center;white-space:nowrap;overflow:hidden}
.style b{font-weight:400;height:36px;line-height:44px;width:60px;overflow:hidden;display:block;color:#222;margin-top:1px;flex:none}
.style span{line-height:16px}
.style.sel{border:2px solid #e2b443;border-radius:2px}
.sel b{margin-top:-1px}
.p-normal{font-family:Lato;font-size:12.5px;letter-spacing:.1px}
.style .p-h1{font:700 16px/42px "Liberation Serif";color:#345d90;letter-spacing:.3px}
.style .p-h2{font:700 15px/42px "Liberation Serif";color:#4a80c0;letter-spacing:.3px}
.style .p-title{font:32px/38px "Liberation Serif";color:#17365d}
.style .p-sub{font:italic 15px/42px "Liberation Serif";color:#4a80c0;letter-spacing:.8px}
.style .p-em{font:italic 13px/42px Lato;color:#808080;letter-spacing:.2px}
.gscroll{margin-left:auto}
.change{width:50px;display:flex;flex-direction:column;align-items:center;padding-top:4px;line-height:13px}
.change .row2{display:flex;align-items:center;gap:2px}
.change>span:nth-child(2){margin-top:2px}
.desk{height:571px;flex:none;display:flex;justify-content:space-between;background:linear-gradient(#c8ccd1,#b7bbc0);overflow:hidden}
.page{margin:7px 0 0 233px;width:876px;height:564px;overflow:hidden;padding-left:106px;background:#fff;box-shadow:0 0 1px #777b82,0 2px 9px #8a8e95;font-family:Lato,sans-serif;font-size:14px;color:#000;white-space:nowrap}
.b{font-weight:700}
.l1{height:42px;line-height:42px;letter-spacing:.12px;font-size:15px}
.l2{height:32px;line-height:32px;display:flex;padding-left:4px}
.mov{width:56px}
.sq{font-style:normal;text-decoration:underline wavy 1px;text-underline-offset:1px;text-decoration-skip-ink:none}
.green{text-decoration-color:#32a032}.blue{text-decoration-color:#3040e0}.red{text-decoration-color:#f02020}
.bits{display:grid}
.first{grid-template-columns:60px 63px 67px 63px 67px 63px 59px 20px;padding-left:40px;height:44px;line-height:44px}
.second{grid-template-columns:63px 71px 66px 60px 63px 67px 59px 20px;padding-left:92px;height:46px;line-height:46px}
.regrow{display:flex;margin:5px 0 0 34px;line-height:22px}
.regrow>b{margin-left:14px}
.reg{display:grid;border:1px solid #000}
.reg span{border-right:1px solid #000}
.reg span:last-child{border-right:0}
.r1{width:510px;height:40px;grid-template-columns:64px 63px 64px 63px 64px 64px 63px 63px}
.r1 span{padding-left:8px;line-height:20px}
.r2{width:512px;height:37px;grid-template-columns:64px 64px 64px 64px 64px 63px 64px 63px;margin:9px 0 0 76px}
.l3{margin-top:33px;height:30px;line-height:30px;display:flex}
.l3 span:first-child{width:43px}
.bigc{font-weight:700;font-size:20px;margin-top:32px;height:30px;line-height:30px}
.desc{margin-top:24.7px;font:13px/16.3px "DejaVu Sans",sans-serif;height:64.3px}
.desc p{text-align-last:justify;white-space:nowrap;letter-spacing:-.1px}
.desc b{font-size:12px}
.d1{width:650px}.d2{width:643px}.d3{width:661px}.d4{width:478px}
.exp{font-weight:700;font-size:22px;letter-spacing:.25px;margin-top:20px;height:30px;line-height:30px}
.carry{font-size:22px;letter-spacing:.1px;margin-top:18px;height:30px;line-height:30px}
.status{height:22px;flex:none;display:flex;align-items:center;background:linear-gradient(#e6e8eb,#cfd2d6 60%,#c2c5ca);border-top:1px solid #8f949b;font-size:11.5px;letter-spacing:-.2px}
.pg,.wd,.pf{height:20px;line-height:19px;border-right:1px solid #8f949b;box-shadow:1px 0 #f2f3f5;white-space:nowrap}
.pg{width:73px;padding-left:3px}.wd{width:87px;padding-left:9px}.pf{width:35px;padding:2px 0 0 8px}
.views{margin-left:auto}
.zoom{width:39px;padding-left:7px;letter-spacing:-.4px}
.taskbar{height:35px;flex:none;display:flex;background:#020409;color:#fff;padding-top:1px}
.taskbar>div{height:34px}
.start{width:43px;display:flex;align-items:center;padding-left:11px;padding-top:3px}
.search{width:344px;background:#333;color:#a0a0a0;font-size:14px;line-height:39px;padding-left:12px;letter-spacing:.12px}
.app{width:49px;display:flex;align-items:center;justify-content:center;padding-top:4px}
.on{background:#303338}
.tray{margin-left:auto;display:flex;align-items:center;padding-top:2px}
.clock{width:80px;display:flex;flex-direction:column;align-items:center;font-size:12px;line-height:17px;letter-spacing:-.5px}
.tray svg{margin-top:2px}
.ink{position:absolute;left:0;top:0;pointer-events:none}
.note text{font:18px "DejaVu Sans";fill:#1553c6}
.act{fill:#8f9398;opacity:.5}
.zoompanel{position:absolute;left:368px;top:0;width:789px;height:53px;background:linear-gradient(#17181a,#262729 20%,#1c1d1f);border-radius:0 0 6px 6px}
.more{margin:16px 0 0 737px;width:40px;display:flex;flex-direction:column;align-items:center;color:#aaa;font-size:13px;line-height:18px}
.more span{margin-top:10px}
.annot{position:absolute;left:354px;top:8px;width:723px;height:43px;background:#3a3b3b;border-radius:5px;display:flex;color:#fff;font-weight:600;font-size:10.5px;line-height:14px;padding-top:4px}
.tool{width:55px;display:flex;flex-direction:column;align-items:center;white-space:nowrap;flex:none}
.tool>svg{height:22px}
.tool.mouse{margin-left:8px}
.text{color:#f5a623}
.spot{width:70px}.eraser{width:54px}.format{width:57px}
.undo{width:55px}.redo{width:54px}.clear{width:56px}.save{width:54px}.quit{width:51px}
.save svg{margin-left:10px}
.share{position:absolute;left:598px;top:53px;width:328px;height:22px;display:flex;border-radius:0 0 4px 4px;overflow:hidden;font-size:12px}
.sharing{width:235px;background:#23d959;color:#1c2b33;display:flex;align-items:center;justify-content:space-between;padding:0 10px 0 6px;font-weight:600;letter-spacing:-.3px}
.sharing span{margin-left:-6px}
.stop{width:93px;background:#e02828;color:#fff;display:flex;align-items:center;gap:8px;padding-left:7px;font-weight:600;font-size:11.5px;line-height:20px;padding-bottom:2px;letter-spacing:-.1px}
.stop i{width:8px;height:8px;background:#fff;border-radius:1px}
```
